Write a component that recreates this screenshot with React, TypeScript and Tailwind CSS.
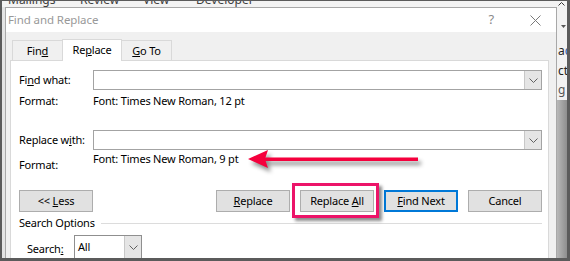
function Chevron() {
  return (
    <svg width="9" height="5" viewBox="0 0 9 5" fill="none" stroke="#606060" strokeWidth="1">
      <polyline points="0.5,0.5 4.5,4.5 8.5,0.5" />
    </svg>
  );
}

function ComboBox() {
  return (
    <div className="flex h-[20px] flex-1 border border-[#a3a3a3] bg-white">
      <div className="flex-1" />
      <div className="flex w-[17px] items-center justify-center border-l border-[#c8c8c8] bg-[#e5e5e5]">
        <Chevron />
      </div>
    </div>
  );
}

function Btn({ children, className = "" }: { children: React.ReactNode; className?: string }) {
  return (
    <div
      className={
        "flex h-[22px] w-[74px] items-center justify-center bg-[#e1e1e1] text-black " +
        (className || "border border-[#adadad]")
      }
    >
      <span className="whitespace-pre">{children}</span>
    </div>
  );
}

export default function App() {
  return (
    <div className="h-[261px] w-[570px] overflow-hidden bg-[#5b5b5b] pb-[3px] pl-[2px] pr-[3px] pt-[1px] font-['Noto_Sans',sans-serif]">
      <div className="flex h-full flex-col bg-[#f3f3f3]">
        {/* ribbon strip, mostly cut off */}
        <div className="flex h-[6px] overflow-hidden pl-[6px] text-[12px] leading-[16px] text-[#404040]">
          <span className="-mt-[9px] w-[72px]">Mailings</span>
          <span className="-mt-[9px] w-[63px]">Review</span>
          <span className="-mt-[9px] w-[53px]">View</span>
          <span className="-mt-[9px]">Developer</span>
          <svg className="ml-auto mr-[2px] mt-[1px]" width="7" height="4" viewBox="0 0 7 4" fill="none" stroke="#333" strokeWidth="1">
            <polyline points="0.5,3.5 3.5,0.5 6.5,3.5" />
          </svg>
        </div>

        <div className="flex min-h-0 flex-1 overflow-hidden">
          <div className="w-[3px] bg-[#e4e4e4]" />

          {/* dialog */}
          <div className="flex w-[552px] flex-col border-l border-r border-t border-[#a8a8a8] bg-[#f0f0f0]">
            <div className="flex h-[24px] items-center bg-white pl-[2px] pr-[15px] text-[11.5px] tracking-[-0.1px] text-[#999999]">
              <span>Find and Replace</span>
              <span className="ml-auto text-[13px] text-[#8a8a8a]">?</span>
              <svg className="ml-[36px]" width="11" height="11" viewBox="0 0 11 11" stroke="#7a7a7a" strokeWidth="1">
                <line x1="0.5" y1="0.5" x2="10.5" y2="10.5" />
                <line x1="10.5" y1="0.5" x2="0.5" y2="10.5" />
              </svg>
            </div>

            <div className="flex min-h-0 flex-1 flex-col pl-[4px] pr-[7px] pt-[7px] text-[11px] tracking-[-0.2px]">
              {/* tabs */}
              <div className="relative z-10 flex h-[21px] items-end pl-[2px] text-black">
                <div className="flex h-[20px] w-[50px] items-center justify-center border border-b-0 border-r-0 border-[#d9d9d9] bg-[#f0f0f0] pt-[1px]">
                  <span>
                    Fin<span className="underline">d</span>
                  </span>
                </div>
                <div className="-mb-[1px] flex h-[22px] w-[60px] items-center justify-center border border-b-0 border-[#d9d9d9] bg-white">
                  <span>
                    Re<span className="underline">p</span>lace
                  </span>
                </div>
                <div className="flex h-[20px] w-[50px] items-center justify-center border border-b-0 border-l-0 border-[#d9d9d9] bg-[#f0f0f0] pt-[1px]">
                  <span className="whitespace-pre">
                    <span className="underline">G</span>o To
                  </span>
                </div>
              </div>

              {/* tab panel */}
              <div className="flex flex-1 flex-col border border-b-0 border-[#d9d9d9] bg-white pl-[8px] pr-[6px] text-black">
                <div className="mt-[9px] flex items-center">
                  <span className="w-[74px]">
                    Fi<span className="underline">n</span>d what:
                  </span>
                  <ComboBox />
                </div>
                <div className="mt-[4px] flex h-[14px] items-center leading-[14px]">
                  <span className="w-[74px]">Format:</span>
                  <span>Font: Times New Roman, 12 pt</span>
                </div>

                <div className="mt-[22px] flex items-center">
                  <span className="w-[74px]">
                    Replace w<span className="underline">i</span>th:
                  </span>
                  <ComboBox />
                </div>
                <div className="relative mt-[2px] flex h-[14px] items-start leading-[14px]">
                  <span className="mt-[6px] w-[74px]">Format:</span>
                  <span>Font: Times New Roman, 9 pt</span>
                  <svg
                    className="absolute left-[225px] top-[-5px] drop-shadow-[3px_4px_2px_rgba(0,0,0,0.45)]"
                    width="182"
                    height="26"
                    viewBox="0 0 182 26"
                  >
                    <polygon points="4,12 24,3 21,12 24,21" fill="#f5003d" />
                    <rect x="20" y="10.5" width="154" height="3.5" fill="#f5003d" />
                  </svg>
                </div>

                {/* buttons */}
                <div className="mt-[24px] flex items-center justify-between">
                  <Btn>
                    &lt;&lt; <span className="underline">L</span>ess
                  </Btn>
                  <div className="flex gap-[10px]">
                    <Btn>
                      <span className="underline">R</span>eplace
                    </Btn>
                    <div className="relative">
                      <Btn>
                        Replace <span className="underline">A</span>ll
                      </Btn>
                      <div className="absolute -bottom-[6px] -left-[8px] -right-[5px] -top-[7px] border-[3px] border-[#ec1469] shadow-[3px_3px_3px_rgba(0,0,0,0.45)]" />
                    </div>
                    <Btn className="border-2 border-[#0078d7]">
                      <span className="underline">F</span>ind Next
                    </Btn>
                    <Btn>Cancel</Btn>
                  </div>
                </div>

                <div className="mt-[4px] flex h-[14px] items-center leading-[14px]">
                  <span>Search Options</span>
                  <div className="ml-[6px] h-px flex-1 bg-[#dcdcdc]" />
                </div>

                <div className="mt-[5px] flex items-start">
                  <span className="ml-[8px] mt-[6px] w-[47px]">
                    Search<span className="underline">:</span>
                  </span>
                  <div className="flex h-[24px] w-[68px] border border-[#8f8f8f] bg-white">
                    <span className="flex-1 pl-[3px] pt-[3px]">All</span>
                    <div className="flex w-[17px] items-center justify-center border-l border-[#c8c8c8] bg-[#e5e5e5]">
                      <Chevron />
                    </div>
                  </div>
                </div>
              </div>
            </div>
          </div>

          {/* Word document edge */}
          <div className="flex w-[10px] flex-col overflow-hidden text-[12px] leading-[20px]">
            <div className="flex h-[93px] flex-col bg-[#f2f2f2] pl-[1px]">
              <div className="mt-[18px] flex h-[4px] justify-end pr-[1px]">
                <svg width="5" height="3" viewBox="0 0 5 3">
                  <polygon points="0,0 5,0 2.5,3" fill="#555" />
                </svg>
              </div>
              <span className="mt-[13px] whitespace-nowrap text-[#222]">
                a<span className="text-[#2b579a]">c</span>
              </span>
              <span className="whitespace-nowrap text-[#222]">ct</span>
              <span className="-mt-[1px] whitespace-nowrap text-[#555]">g</span>
            </div>
            <div className="flex-1 bg-gradient-to-r from-[#b8b8b8] to-[#8e8e8e]" />
          </div>
        </div>
      </div>
    </div>
  );
}
